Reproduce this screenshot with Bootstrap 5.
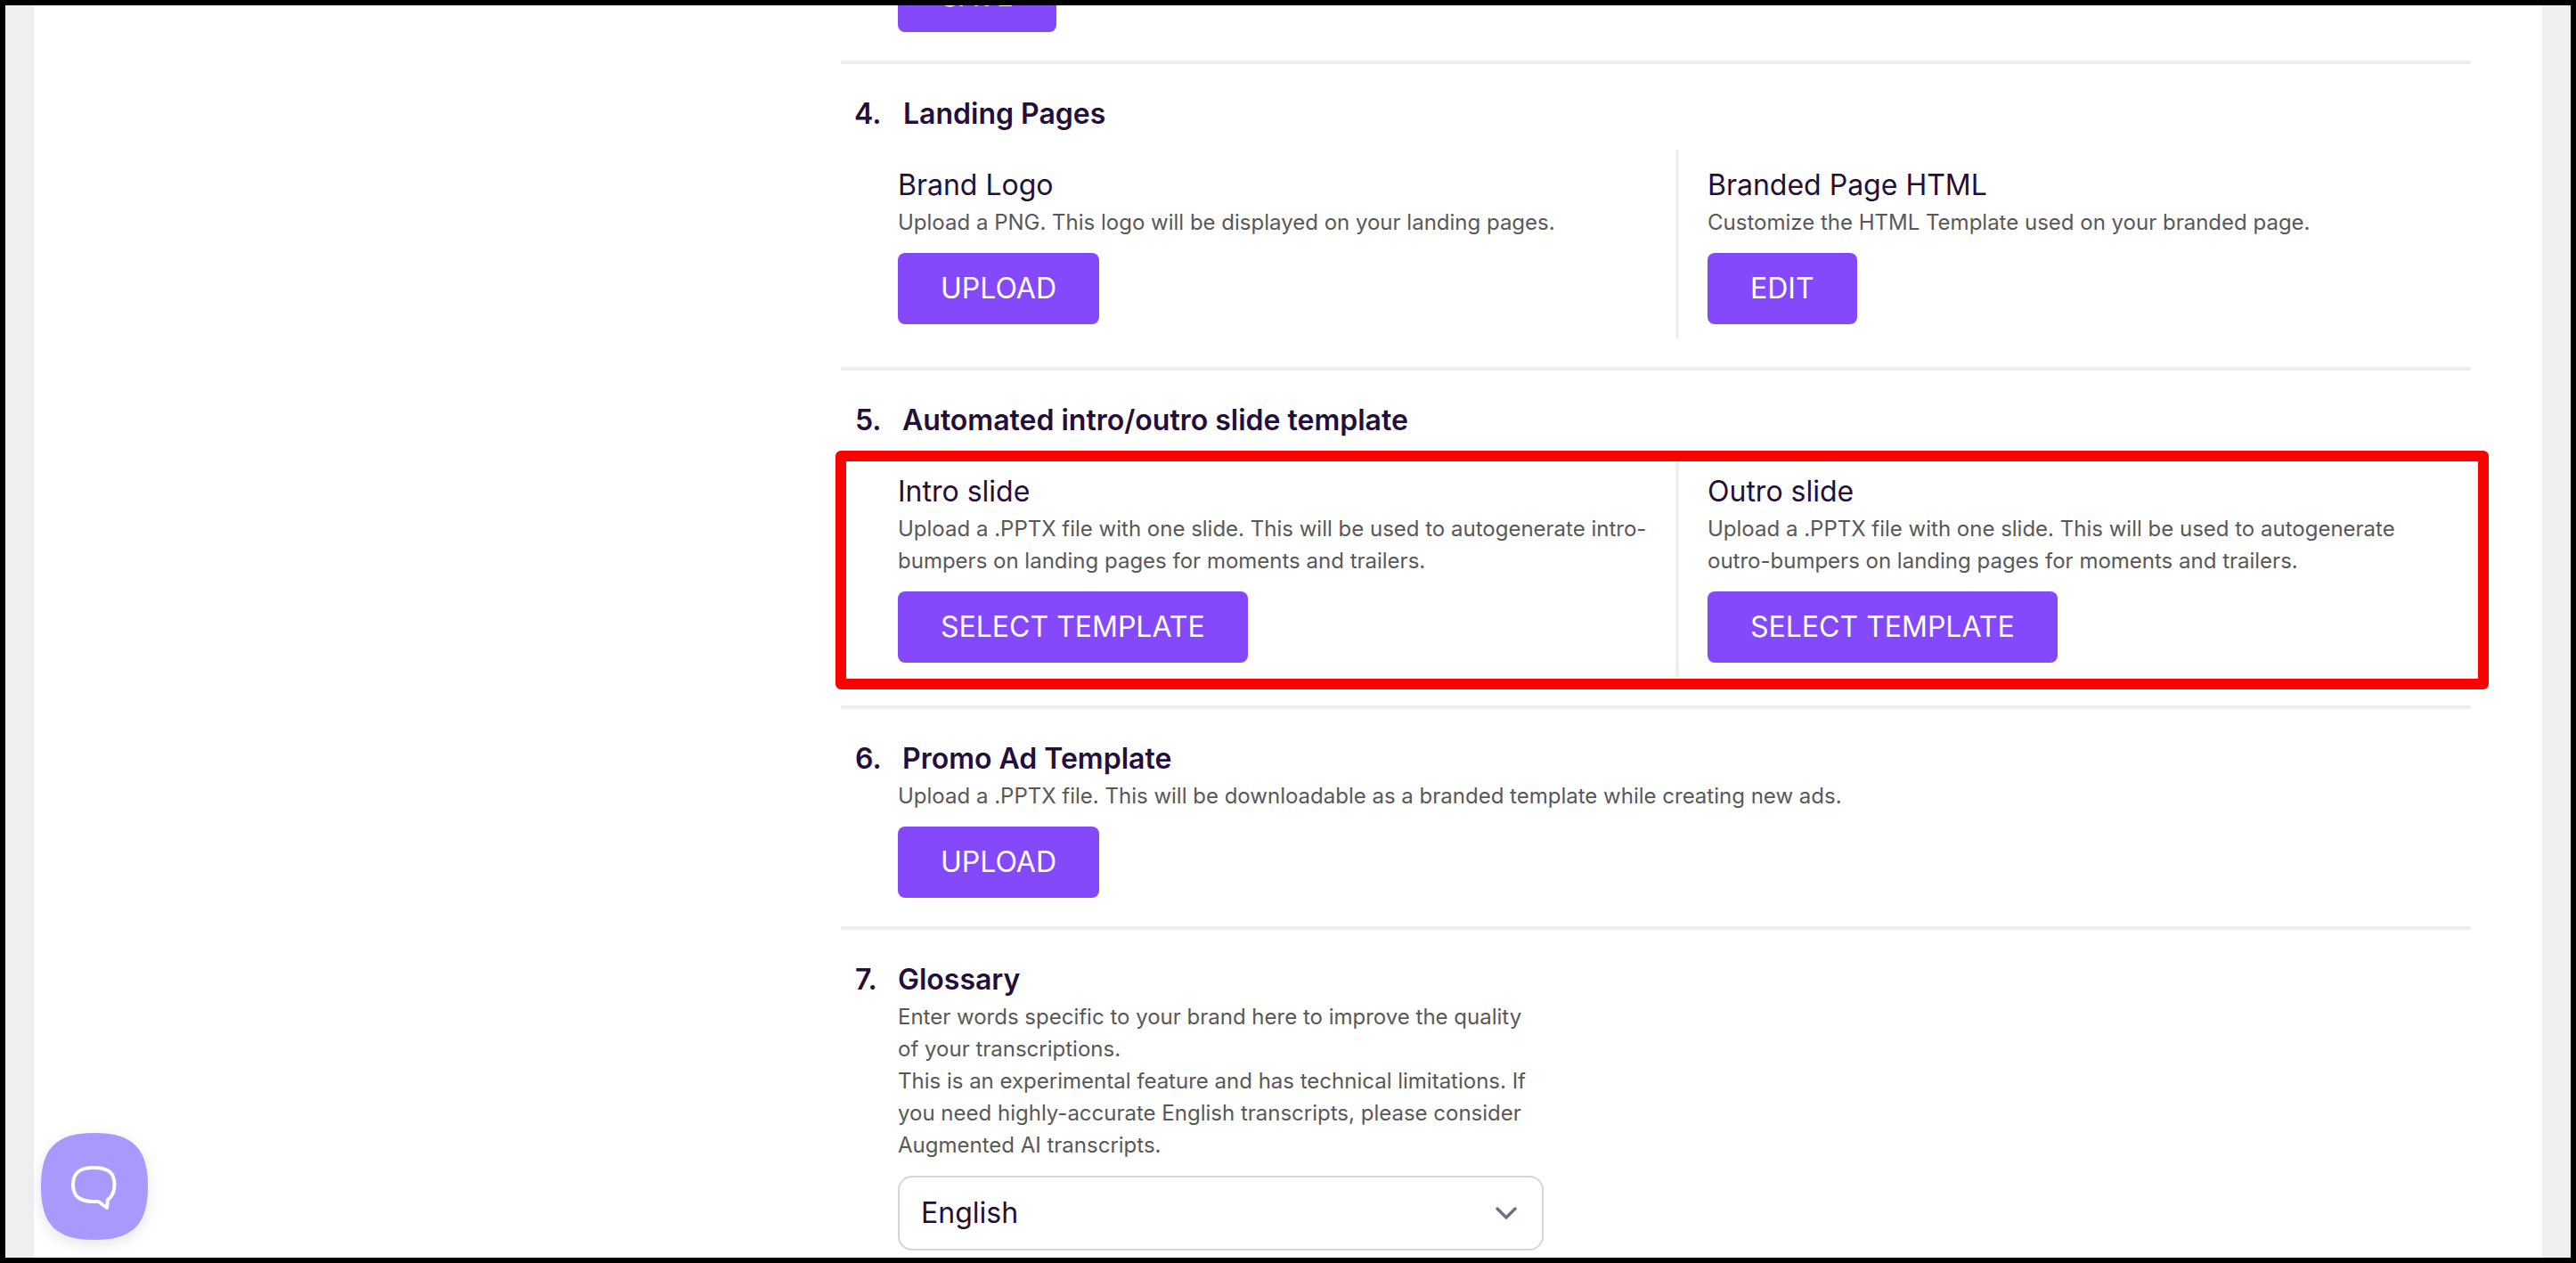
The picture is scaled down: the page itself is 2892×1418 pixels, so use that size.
<!DOCTYPE html>
<html lang="en">
<head>
    <meta charset="UTF-8">
    <meta name="viewport" content="width=device-width, initial-scale=1.0">
    <title>Brand Settings</title>
    <link rel="stylesheet" href="https://cdn.jsdelivr.net/npm/bootstrap@5.3.0/dist/css/bootstrap.min.css">
    <style>
        body {
            font-family: Inter, "Liberation Sans", sans-serif;
            font-size: 32px;
            line-height: 48px;
            color: #230f3a;
            background: #efefef;
        }
        .page-frame {
            height: 1418px;
            border: 6px solid #000;
            padding: 0 32px;
        }
        .settings-sheet {
            padding-left: 906px;
            padding-right: 80px;
        }
        .settings-section {
            border-bottom: 4px solid #efefef;
            padding: 32px 16px;
        }
        .settings-section:last-child { border-bottom: 0; }
        .section-cut { margin-top: -82px; padding-top: 32px; }
        .section-body { padding-left: 48px; }
        .section-title {
            font-size: 32px;
            line-height: 48px;
            font-weight: 600;
            margin: 0;
        }
        .title-number { width: 53px; }
        .title-number-wide { width: 54px; margin-left: -1px; margin-right: 1px; }
        .title-number-tight { width: 48px; }
        .hint {
            font-size: 24px;
            line-height: 36px;
            color: #585858;
            margin: 0 0 16px;
        }
        .split-left {
            flex: 0 0 877px;
            border-right: 4px solid #efefef;
            padding: 16px 32px 16px 0;
        }
        .split-right {
            padding: 16px 0 16px 32px;
        }
        .btn-brand {
            --bs-btn-color: #fff;
            --bs-btn-bg: #8349fa;
            --bs-btn-hover-color: #fff;
            --bs-btn-hover-bg: #7238ea;
            --bs-btn-border-width: 0;
            --bs-btn-font-size: 32px;
            --bs-btn-font-weight: 400;
            --bs-btn-line-height: 48px;
            --bs-btn-padding-x: 48px;
            --bs-btn-padding-y: 16px;
            --bs-btn-border-radius: 8px;
            display: block;
        }
        .glossary-body { width: 773px; }
        .language-select {
            height: 84px;
            border: 2px solid #d6d6d6;
            border-radius: 16px;
            padding: 0 28px 0 24px;
        }
        .red-outline {
            left: 938px;
            top: 506px;
            width: 1856px;
            height: 268px;
            border: 12px solid #f00;
            border-radius: 6px;
            pointer-events: none;
        }
        .chat-launcher {
            left: 46px;
            top: 1272px;
            filter: drop-shadow(0 5px 8px rgba(0, 0, 0, .1));
        }
    </style>
</head>
<body>
    <div class="page-frame position-relative overflow-hidden">
        <div class="settings-sheet bg-white h-100 overflow-hidden">

            <!-- End of the previous section -->
            <section class="settings-section section-cut">
                <div class="section-body">
                    <button type="button" class="btn btn-brand">SAVE</button>
                </div>
            </section>

            <!-- Landing Pages -->
            <section class="settings-section">
                <h2 class="section-title d-flex"><span class="title-number-wide">4.</span>Landing Pages</h2>
                <div class="section-body d-flex mt-3">
                    <div class="split-left">
                        <div>Brand Logo</div>
                        <p class="hint">Upload a PNG. This logo will be displayed on your landing pages.</p>
                        <button type="button" class="btn btn-brand">UPLOAD</button>
                    </div>
                    <div class="split-right">
                        <div>Branded Page HTML</div>
                        <p class="hint">Customize the HTML Template used on your branded page.</p>
                        <button type="button" class="btn btn-brand">EDIT</button>
                    </div>
                </div>
            </section>

            <!-- Intro / outro slides -->
            <section class="settings-section">
                <h2 class="section-title d-flex"><span class="title-number">5.</span>Automated intro/outro slide template</h2>
                <div class="section-body d-flex mt-3">
                    <div class="split-left">
                        <div>Intro slide</div>
                        <p class="hint">Upload a .PPTX file with one slide. This will be used to autogenerate intro-<br>bumpers on landing pages for moments and trailers.</p>
                        <button type="button" class="btn btn-brand">SELECT TEMPLATE</button>
                    </div>
                    <div class="split-right">
                        <div>Outro slide</div>
                        <p class="hint">Upload a .PPTX file with one slide. This will be used to autogenerate<br>outro-bumpers on landing pages for moments and trailers.</p>
                        <button type="button" class="btn btn-brand">SELECT TEMPLATE</button>
                    </div>
                </div>
            </section>

            <!-- Promo Ad Template -->
            <section class="settings-section">
                <h2 class="section-title d-flex"><span class="title-number">6.</span>Promo Ad Template</h2>
                <div class="section-body">
                    <p class="hint">Upload a .PPTX file. This will be downloadable as a branded template while creating new ads.</p>
                    <button type="button" class="btn btn-brand">UPLOAD</button>
                </div>
            </section>

            <!-- Glossary -->
            <section class="settings-section">
                <h2 class="section-title d-flex"><span class="title-number-tight">7.</span>Glossary</h2>
                <div class="section-body glossary-body">
                    <p class="hint text-nowrap">Enter words specific to your brand here to improve the quality<br>of your transcriptions.<br>This is an experimental feature and has technical limitations. If<br>you need highly-accurate English transcripts, please consider<br>Augmented AI transcripts.</p>
                    <div class="language-select d-flex align-items-center justify-content-between" role="button">
                        <span>English</span>
                        <svg width="24" height="16" viewBox="0 0 24 16" fill="none" stroke="#6c7183" stroke-width="3.4" stroke-linecap="round" stroke-linejoin="round">
                            <path d="M2 3l10 10L22 3"/>
                        </svg>
                    </div>
                </div>
            </section>
        </div>
    </div>

    <div class="red-outline position-absolute"></div>

    <!-- Chat launcher -->
    <svg class="chat-launcher position-absolute" width="120" height="120" viewBox="0 0 120 120">
        <path fill="#a899fc" d="M60 0C103 0 120 17 120 60S103 120 60 120 0 103 0 60 17 0 60 0Z"/>
        <path fill="none" stroke="#fff" stroke-width="4" stroke-linejoin="round" d="M59 39C75 39 82.500 44 82.500 58C82.500 67 80 71.500 75 75L74 84L64.500 77H59C43 77 36 71 36 58S43 39 59 39Z"/>
    </svg>

    <script src="https://cdn.jsdelivr.net/npm/bootstrap@5.3.0/dist/js/bootstrap.bundle.min.js"></script>
</body>
</html>
